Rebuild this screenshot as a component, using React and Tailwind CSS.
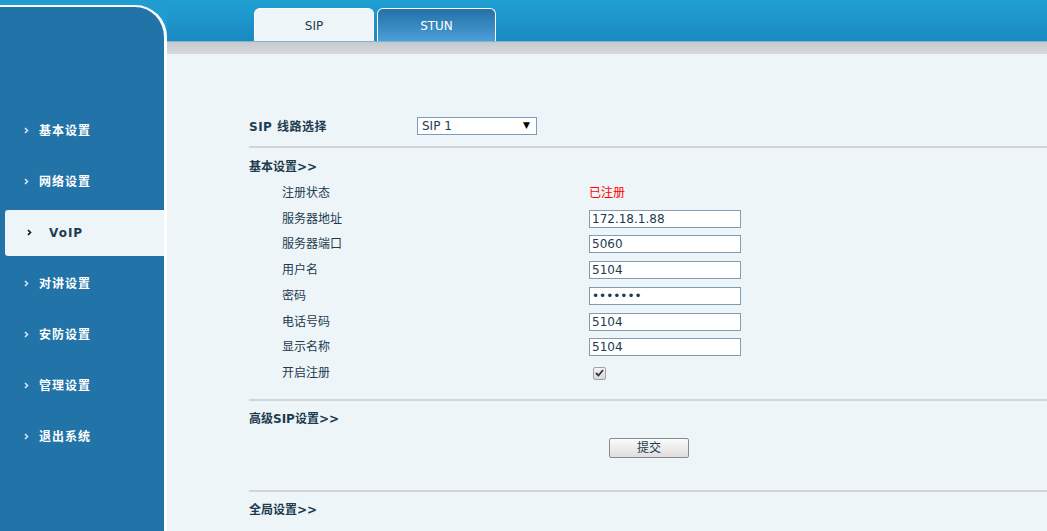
import React from "react";

const menu = ["基本设置", "网络设置", "VoIP", "对讲设置", "安防设置", "管理设置", "退出系统"];

const fields = [
    { label: "注册状态", status: "已注册" },
    { label: "服务器地址", value: "172.18.1.88" },
    { label: "服务器端口", value: "5060" },
    { label: "用户名", value: "5104" },
    { label: "密码", value: "1234567", password: true },
    { label: "电话号码", value: "5104" },
    { label: "显示名称", value: "5104" },
    { label: "开启注册", check: true },
];

function Chevron({ dark }) {
    return (
        <svg width="5" height="7" viewBox="0 0 5 7" className="shrink-0">
            <polyline
                points="1,1 3.5,3.5 1,6"
                fill="none"
                stroke={dark ? "#111" : "#d6e6f2"}
                strokeWidth="1.6"
            />
        </svg>
    );
}

function Sidebar() {
    return (
        <div className="w-[167px] shrink-0 flex flex-col bg-[#1f9cd0] pt-[5px]">
            <div className="flex-1 bg-[#2274a8] border-t-2 border-r-[3px] border-white rounded-tr-[32px] pt-[98px]">
                {menu.map((item) =>
                    item === "VoIP" ? (
                        <div key={item} className="h-[51px] flex items-center">
                            <div className="ml-[5px] flex-1 h-[46px] bg-[#eef5f8] rounded-l-[3px] flex items-center pl-[22px] gap-[17px]">
                                <Chevron dark />
                                <span className="text-[12px] font-bold text-[#1d3b4f] tracking-[1px]">VoIP</span>
                            </div>
                        </div>
                    ) : (
                        <div key={item} className="h-[51px] flex items-center pl-[24px] gap-[10px]">
                            <Chevron />
                            <span className="text-[12px] font-bold text-white tracking-[1px]">{item}</span>
                        </div>
                    )
                )}
            </div>
        </div>
    );
}

function Header() {
    return (
        <>
            <div className="h-[41px] shrink-0 bg-gradient-to-b from-[#20a0d2] to-[#1a89c2] flex items-end pl-[87px] gap-[3px]">
                <div className="w-[120px] h-[33px] pt-[2px] rounded-t-[6px] border border-b-0 border-white bg-[#eef5f8] flex items-center justify-center text-[12px] text-[#1d3b4f]">
                    SIP
                </div>
                <div className="w-[119px] h-[33px] pt-[2px] rounded-t-[6px] border border-b-0 border-white bg-gradient-to-b from-[#2271a9] to-[#4c9ed6] flex items-center justify-center text-[12px] text-white">
                    STUN
                </div>
            </div>
            <div className="h-[13px] shrink-0 border-t border-[#7fb4d6] bg-gradient-to-b from-[#c4c9ce] to-[#d7dadd]" />
        </>
    );
}

function Field({ f }) {
    return (
        <div className="h-[25.75px] flex items-center pl-[33px]">
            <span className="w-[307px] text-[12px] text-[#1d3b4f]">{f.label}</span>
            {f.status && <span className="text-[12px] text-[#ff0000]">{f.status}</span>}
            {f.value && (
                <input
                    readOnly
                    type={f.password ? "password" : "text"}
                    value={f.value}
                    className="w-[152px] h-[18px] border border-[#7f9db9] bg-white px-[2px] text-[12px] text-[#1d3b4f] outline-none"
                />
            )}
            {f.check && (
                <span className="ml-[4px] w-[13px] h-[13px] rounded-[2px] border border-[#a2a2a2] bg-gradient-to-b from-[#f4f4f4] to-[#d8d8d8] flex items-center justify-center">
                    <svg width="9" height="8" viewBox="0 0 9 8">
                        <polyline points="1,4 3.5,6.5 8,1" fill="none" stroke="#333" strokeWidth="1.8" />
                    </svg>
                </span>
            )}
        </div>
    );
}

function Content() {
    return (
        <div className="flex-1 bg-[#eef5f8] pl-[82px] pt-[63px] text-[#1d3b4f]">
            <div className="h-[18px] flex items-center">
                <span className="w-[168px] pt-[2px] text-[12px] font-bold tracking-[0.5px]">SIP 线路选择</span>
                <div className="w-[120px] h-[18px] border border-[#7f9db9] bg-white flex items-center justify-between pl-[4px] pr-[6px] text-[12px]">
                    <span>SIP 1</span>
                    <span className="text-[9px] text-black">▼</span>
                </div>
            </div>
            <div className="mt-[11px] h-[2px] bg-[#d2d4d6]" />
            <div className="mt-[11px] h-[16px] leading-[16px] text-[12px] font-bold">基本设置&gt;&gt;</div>
            <div className="mt-[5px] flex flex-col">
                {fields.map((f) => (
                    <Field key={f.label} f={f} />
                ))}
            </div>
            <div className="mt-[13px] h-[2px] bg-[#d2d4d6]" />
            <div className="mt-[10px] h-[16px] leading-[16px] text-[12px] font-bold">高级SIP设置&gt;&gt;</div>
            <div className="mt-[11px] pl-[360px] flex">
                <button className="w-[80px] h-[20px] rounded-[2px] border border-[#8a8a8a] bg-gradient-to-b from-[#fbfbfb] to-[#dedede] text-[12px] text-[#1d3b4f]">
                    提交
                </button>
            </div>
            <div className="mt-[32px] h-[2px] bg-[#d2d4d6]" />
            <div className="mt-[10px] h-[16px] leading-[16px] text-[12px] font-bold">全局设置&gt;&gt;</div>
        </div>
    );
}

export default function App() {
    return (
        <div className="flex h-[531px] w-full overflow-hidden bg-[#eef5f8] font-['DejaVu_Sans','Noto_Sans_CJK_SC',sans-serif]">
            <Sidebar />
            <div className="flex-1 flex flex-col">
                <Header />
                <Content />
            </div>
        </div>
    );
}
